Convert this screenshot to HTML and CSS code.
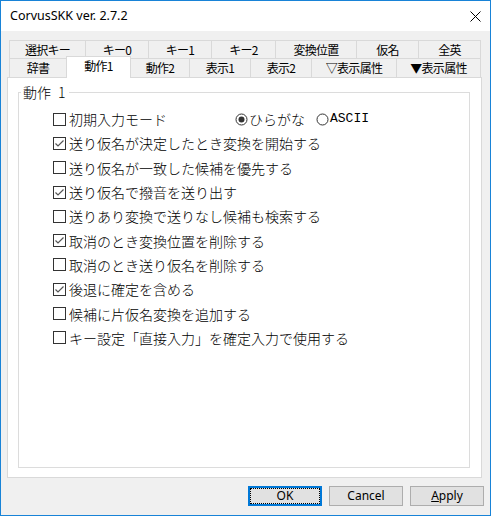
FILE: index.html
```html
<!DOCTYPE html>
<html lang="ja">
<head>
<meta charset="utf-8">
<title>CorvusSKK</title>
<link rel="stylesheet" href="styles.css">
</head>
<body>
<div class="window">
  <div class="titlebar">
    <span class="title">CorvusSKK ver. 2.7.2</span>
    <svg class="close" width="11" height="11" viewBox="0 0 11 11"><path d="M0.5 0.5 L10.5 10.5 M10.5 0.5 L0.5 10.5" stroke="#000" stroke-width="1" fill="none"/></svg>
  </div>
  <div class="client">
    <div class="tabs">
      <div class="tabrow row1">
        <div class="tab">選択キー</div>
        <div class="tab">キー0</div>
        <div class="tab">キー1</div>
        <div class="tab">キー2</div>
        <div class="tab">変換位置</div>
        <div class="tab">仮名</div>
        <div class="tab">全英</div>
      </div>
      <div class="tabrow row2">
        <div class="tab">辞書</div>
        <div class="tab selected">動作1</div>
        <div class="tab">動作2</div>
        <div class="tab">表示1</div>
        <div class="tab">表示2</div>
        <div class="tab">▽表示属性</div>
        <div class="tab">▼表示属性</div>
      </div>
    </div>
    <div class="panel">
      <div class="group">
        <span class="group-label">動作<span class="num">1</span></span>
        <div class="row">
          <svg class="cb" width="13" height="13" viewBox="0 0 13 13"><rect x="0.5" y="0.5" width="12" height="12" fill="#fff" stroke="#333"/></svg>
          <span class="mode">初期入力モード</span>
          <svg class="radio" width="13" height="13" viewBox="0 0 13 13"><circle cx="6.5" cy="6.5" r="5.5" fill="#fff" stroke="#333"/><circle cx="6.5" cy="6.5" r="3" fill="#333"/></svg>
          <span>ひらがな</span>
          <svg class="radio radio-second" width="13" height="13" viewBox="0 0 13 13"><circle cx="6.5" cy="6.5" r="5.5" fill="#fff" stroke="#333"/></svg>
          <span class="ascii">ASCII</span>
        </div>
        <div class="row">
          <svg class="cb" width="13" height="13" viewBox="0 0 13 13"><rect x="0.5" y="0.5" width="12" height="12" fill="#fff" stroke="#333"/><path d="M2.5 6.5 L5 9 L10.5 3.5" stroke="#555" stroke-width="1.2" fill="none"/></svg>
          <span>送り仮名が決定したとき変換を開始する</span>
        </div>
        <div class="row">
          <svg class="cb" width="13" height="13" viewBox="0 0 13 13"><rect x="0.5" y="0.5" width="12" height="12" fill="#fff" stroke="#333"/></svg>
          <span>送り仮名が一致した候補を優先する</span>
        </div>
        <div class="row">
          <svg class="cb" width="13" height="13" viewBox="0 0 13 13"><rect x="0.5" y="0.5" width="12" height="12" fill="#fff" stroke="#333"/><path d="M2.5 6.5 L5 9 L10.5 3.5" stroke="#555" stroke-width="1.2" fill="none"/></svg>
          <span>送り仮名で撥音を送り出す</span>
        </div>
        <div class="row">
          <svg class="cb" width="13" height="13" viewBox="0 0 13 13"><rect x="0.5" y="0.5" width="12" height="12" fill="#fff" stroke="#333"/></svg>
          <span>送りあり変換で送りなし候補も検索する</span>
        </div>
        <div class="row">
          <svg class="cb" width="13" height="13" viewBox="0 0 13 13"><rect x="0.5" y="0.5" width="12" height="12" fill="#fff" stroke="#333"/><path d="M2.5 6.5 L5 9 L10.5 3.5" stroke="#555" stroke-width="1.2" fill="none"/></svg>
          <span>取消のとき変換位置を削除する</span>
        </div>
        <div class="row">
          <svg class="cb" width="13" height="13" viewBox="0 0 13 13"><rect x="0.5" y="0.5" width="12" height="12" fill="#fff" stroke="#333"/></svg>
          <span>取消のとき送り仮名を削除する</span>
        </div>
        <div class="row">
          <svg class="cb" width="13" height="13" viewBox="0 0 13 13"><rect x="0.5" y="0.5" width="12" height="12" fill="#fff" stroke="#333"/><path d="M2.5 6.5 L5 9 L10.5 3.5" stroke="#555" stroke-width="1.2" fill="none"/></svg>
          <span>後退に確定を含める</span>
        </div>
        <div class="row">
          <svg class="cb" width="13" height="13" viewBox="0 0 13 13"><rect x="0.5" y="0.5" width="12" height="12" fill="#fff" stroke="#333"/></svg>
          <span>候補に片仮名変換を追加する</span>
        </div>
        <div class="row">
          <svg class="cb" width="13" height="13" viewBox="0 0 13 13"><rect x="0.5" y="0.5" width="12" height="12" fill="#fff" stroke="#333"/></svg>
          <span>キー設定「直接入力」を確定入力で使用する</span>
        </div>
      </div>
    </div>
    <div class="buttons">
      <button class="btn btn-default"><span class="focus">OK</span></button>
      <button class="btn">Cancel</button>
      <button class="btn"><u>A</u>pply</button>
    </div>
  </div>
</div>
</body>
</html>
```

FILE: styles.css
```css
html, body {
  margin: 0;
  padding: 0;
  background: #fff;
}

.window {
  width: 491px;
  height: 516px;
  box-sizing: border-box;
  border: 1px solid #1883d7;
  background: #f0f0f0;
  display: flex;
  flex-direction: column;
  font-family: "Noto Sans CJK JP", sans-serif;
  color: #000;
}

.titlebar {
  height: 30px;
  flex: none;
  background: #fff;
  display: flex;
  align-items: center;
  justify-content: space-between;
  padding: 0 9px 0 9px;
}

.title {
  font-family: "Noto Sans", "Liberation Sans", sans-serif;
  font-size: 12.5px;
  line-height: 16px;
}

.close {
  display: block;
}

.client {
  flex: 1;
  display: flex;
  flex-direction: column;
  padding: 9px 8px 9px 6px;
  min-height: 0;
}

.tabs {
  margin-left: 2px;
  display: flex;
  flex-direction: column;
  flex: none;
}

.tabrow {
  display: flex;
}

.row1 { height: 18px; }
.row2 { height: 19px; }

.tab {
  box-sizing: border-box;
  height: 100%;
  border: 1px solid #d9d9d9;
  border-bottom: none;
  margin-left: -1px;
  background: #f0f0f0;
  font-size: 12px;
  letter-spacing: -0.7px;
  line-height: 1;
  display: flex;
  align-items: center;
  justify-content: center;
  white-space: nowrap;
}

.tab:first-child { margin-left: 0; }

.row1 .tab:nth-child(1) { width: 77px; }
.row1 .tab:nth-child(2) { width: 64px; }
.row1 .tab:nth-child(3) { width: 64px; }
.row1 .tab:nth-child(4) { width: 65px; }
.row1 .tab:nth-child(5) { width: 82px; }
.row1 .tab:nth-child(6) { width: 63px; }
.row1 .tab:nth-child(7) { width: 63px; }

.row2 .tab:nth-child(1) { width: 58px; }
.row2 .tab:nth-child(2) { width: 65px; }
.row2 .tab:nth-child(3) { width: 60px; }
.row2 .tab:nth-child(4) { width: 62px; }
.row2 .tab:nth-child(5) { width: 62px; }
.row2 .tab:nth-child(6) { width: 86px; }
.row2 .tab:nth-child(7) { width: 85px; }

.tab.selected {
  background: #fff;
  position: relative;
  z-index: 1;
  height: 22px;
  margin-top: -2px;
  align-self: flex-start;
  padding-bottom: 3px;
}

.panel {
  flex: 1;
  background: #fff;
  border: 1px solid #d9d9d9;
  display: flex;
  flex-direction: column;
  min-height: 0;
}

.group {
  flex: 1;
  margin: 14px 11px 9px 10px;
  border: 1px solid #dcdcdc;
  position: relative;
  padding: 14px 0 0 34px;
  font-weight: 300;
}

.group-label {
  position: absolute;
  top: -9px;
  left: 2px;
  padding: 0 3px 0 2px;
  background: #fff;
  font-size: 14px;
  line-height: 16px;
}

.num {
  margin-left: 7px;
}

.row {
  height: 24.3px;
  display: flex;
  align-items: center;
  font-size: 14px;
  line-height: 16px;
  white-space: nowrap;
}

.cb {
  flex: none;
  display: block;
  margin-right: 3px;
}

.mode {
  width: 166px;
  flex: none;
}

.radio {
  flex: none;
  display: block;
  margin-right: 1px;
}

.radio-second {
  margin-left: 11px;
}

.ascii {
  font-family: "Liberation Mono", monospace;
  font-size: 13px;
  font-weight: 400;
}

.buttons {
  display: flex;
  justify-content: flex-end;
  gap: 7px;
  margin-top: 8px;
  margin-right: -2px;
  flex: none;
}

.btn {
  width: 74px;
  height: 20px;
  box-sizing: border-box;
  border: 1px solid #adadad;
  background: #e1e1e1;
  font-family: "Noto Sans", "Liberation Sans", sans-serif;
  font-size: 12px;
  line-height: 14px;
  color: #000;
  padding: 0;
  margin: 0;
  display: flex;
  align-items: center;
  justify-content: center;
}

.btn-default {
  border: 2px solid #0078d7;
}

.focus {
  width: 100%;
  height: 100%;
  box-sizing: border-box;
  border: 1px dotted #000;
  display: flex;
  align-items: center;
  justify-content: center;
}
```
